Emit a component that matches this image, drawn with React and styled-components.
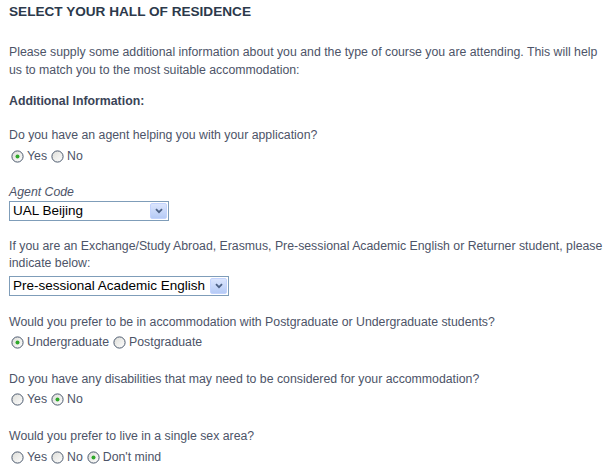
import React from "react";
import styled, { createGlobalStyle } from "styled-components";

const GlobalStyle = createGlobalStyle`
  body {
    margin: 0;
    background: #ffffff;
    font-family: "Liberation Sans", Arial, sans-serif;
  }
`;

const Page = styled.div`
  padding: 3px 6px 0 9px;
  font-size: 12.3px;
  line-height: 18px;
  color: #4d5468;
`;

const Title = styled.h2`
  margin: 0 0 22px;
  font-size: 13.6px;
  line-height: 18px;
  font-weight: bold;
  color: #2c394b;
`;

const Intro = styled.p`
  margin: 0 0 13px;
  max-width: 594px;
`;

const SubTitle = styled.h3`
  margin: 0 0 16px;
  font-size: 12.3px;
  line-height: 18px;
  font-weight: bold;
  color: #3a4457;
`;

const Field = styled.div`
  margin-bottom: ${(p) => p.$gap || 18}px;
`;

const Question = styled.div`
  line-height: ${(p) => (p.$tight ? 17 : 18)}px;
`;

const Caption = styled.div`
  font-style: italic;
  line-height: 18px;
`;

const RadioRow = styled.div`
  display: flex;
  align-items: center;
  gap: 4px;
  margin-top: ${(p) => p.$top || 2}px;
  padding-left: 2px;
  height: 18px;
`;

const RadioLabel = styled.label`
  display: inline-flex;
  align-items: center;
  gap: 3px;
  cursor: pointer;
`;

const Circle = styled.svg`
  width: 13px;
  height: 13px;
  flex: none;
`;

const Radio = ({ label, checked }) => (
  <RadioLabel>
    <Circle viewBox="0 0 13 13">
      <defs>
        <linearGradient id="rg" x1="0" y1="0" x2="1" y2="1">
          <stop offset="0" stopColor="#dcdcd7" />
          <stop offset="1" stopColor="#ffffff" />
        </linearGradient>
      </defs>
      <circle cx="6.5" cy="6.5" r="5.6" fill="url(#rg)" stroke="#4c5a6e" strokeWidth="1" />
      {checked && <circle cx="6.5" cy="6.5" r="2" fill="#2fa82a" />}
    </Circle>
    {label}
  </RadioLabel>
);

const SelectBox = styled.div`
  display: flex;
  align-items: center;
  justify-content: space-between;
  box-sizing: border-box;
  width: ${(p) => p.$width}px;
  height: 20px;
  margin-top: ${(p) => p.$top || 0}px;
  border: 1px solid #7f9db9;
  background: #fff;
  color: #000;
  font-size: 13.5px;
  padding-left: 3px;
`;

const ArrowButton = styled.div`
  display: flex;
  align-items: center;
  justify-content: center;
  box-sizing: border-box;
  width: 17px;
  height: 16px;
  margin-right: 1px;
  border: 1px solid #c3d3fd;
  border-radius: 2px;
  background: linear-gradient(#dbe5fd, #b6cbf6);
`;

const Select = ({ value, width, top }) => (
  <SelectBox $width={width} $top={top}>
    <span>{value}</span>
    <ArrowButton>
      <svg width="8" height="6" viewBox="0 0 8 6">
        <path d="M1 1.2 L4 4.2 L7 1.2" fill="none" stroke="#4d6185" strokeWidth="1.8" />
      </svg>
    </ArrowButton>
  </SelectBox>
);

const App = () => {
  return (
    <Page>
      <GlobalStyle />
      <Title>SELECT YOUR HALL OF RESIDENCE</Title>
      <Intro>
        Please supply some additional information about you and the type of
        course you are attending. This will help us to match you to the most
        suitable accommodation:
      </Intro>
      <SubTitle>Additional Information:</SubTitle>

      <Field $gap={18}>
        <Question>Do you have an agent helping you with your application?</Question>
        <RadioRow $top={3}>
          <Radio label="Yes" checked />
          <Radio label="No" />
        </RadioRow>
      </Field>

      <Field $gap={17}>
        <Caption>Agent Code</Caption>
        <Select value="UAL Beijing" width={160} />
      </Field>

      <Field $gap={17}>
        <Question $tight>
          If you are an Exchange/Study Abroad, Erasmus, Pre-sessional Academic
          English or Returner student, please indicate below:
        </Question>
        <Select value="Pre-sessional Academic English" width={220} top={4} />
      </Field>

      <Field $gap={19}>
        <Question>
          Would you prefer to be in accommodation with Postgraduate or
          Undergraduate students?
        </Question>
        <RadioRow>
          <Radio label="Undergraduate" checked />
          <Radio label="Postgraduate" />
        </RadioRow>
      </Field>

      <Field $gap={19}>
        <Question>
          Do you have any disabilities that may need to be considered for your
          accommodation?
        </Question>
        <RadioRow>
          <Radio label="Yes" />
          <Radio label="No" checked />
        </RadioRow>
      </Field>

      <Field>
        <Question>Would you prefer to live in a single sex area?</Question>
        <RadioRow $top={3}>
          <Radio label="Yes" />
          <Radio label="No" />
          <Radio label="Don't mind" checked />
        </RadioRow>
      </Field>
    </Page>
  );
};

export default App;
